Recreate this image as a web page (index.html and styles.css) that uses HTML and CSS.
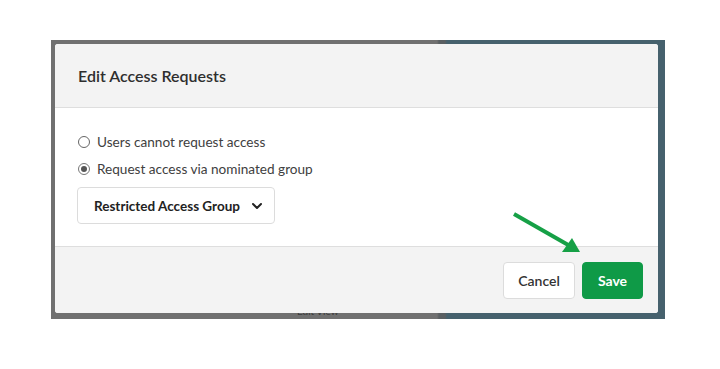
FILE: index.html
```html
<!DOCTYPE html>
<html lang="en">
<head>
  <meta charset="UTF-8">
  <title>Edit Access Requests</title>
  <link rel="stylesheet" href="styles.css">
</head>
<body>
  <div class="backdrop">
    <span class="peek">Edit View</span>
    <div class="modal">
      <div class="modal-header">
        <h2>Edit Access Requests</h2>
      </div>
      <div class="modal-body">
        <label class="radio-row">
          <span class="radio"></span>
          Users cannot request access
        </label>
        <label class="radio-row">
          <span class="radio checked"></span>
          Request access via nominated group
        </label>
        <button class="group-select">
          Restricted Access Group
          <svg class="chevron" width="12" height="8" viewBox="0 0 12 8"><path d="M2 2l4 4 4-4" fill="none" stroke="#222" stroke-width="2" stroke-linecap="round" stroke-linejoin="round"/></svg>
        </button>
      </div>
      <div class="modal-footer">
        <button class="btn btn-cancel">Cancel</button>
        <button class="btn btn-save">Save</button>
      </div>
    </div>
    <svg class="arrow" width="80" height="50" viewBox="0 0 80 50">
      <line x1="2" y1="3" x2="58" y2="35" stroke="#16a046" stroke-width="4"/>
      <polygon points="68,41 50,41 60,27" fill="#16a046"/>
    </svg>
  </div>
</body>
</html>
```

FILE: styles.css
```css
body {
  margin: 0;
  padding: 40px 0 0 51px;
  background: #fff;
  font-family: 'Lato', 'Open Sans', sans-serif;
  color: #333;
}
.backdrop {
  position: relative;
  width: 603px;
  height: 269px;
  padding: 4px 7px 6px 4px;
  background: linear-gradient(90deg, #707070 0, #707070 386px, #5a5f62 388px, #5a5f62 394px, #46616d 396px, #46616d 100%);
}
.peek {
  position: absolute;
  left: 246px;
  bottom: 2px;
  font-size: 10px;
  color: #3a3a3a;
}
.modal {
  position: relative;
  display: flex;
  flex-direction: column;
  height: 100%;
  background: #fff;
  border-radius: 3px;
  overflow: hidden;
}
.modal-header {
  height: 63px;
  display: flex;
  align-items: center;
  padding-left: 23px;
  background: #f3f3f3;
  border-bottom: 1px solid #dedede;
}
.modal-header h2 {
  margin: 0;
  font-size: 16px;
  font-weight: 600;
  color: #2e2e2e;
}
.modal-body {
  flex: 1;
  display: flex;
  flex-direction: column;
  align-items: flex-start;
  padding: 20px 22px 0;
}
.radio-row {
  display: flex;
  align-items: center;
  gap: 7px;
  height: 27px;
  font-size: 13.6px;
  color: #404040;
}
.radio {
  width: 12px;
  height: 12px;
  border: 1px solid #666;
  border-radius: 50%;
  margin-left: 1px;
  box-sizing: border-box;
  display: flex;
  align-items: center;
  justify-content: center;
}
.radio.checked {
  border-color: #777;
}
.radio.checked::after {
  content: "";
  width: 6px;
  height: 6px;
  border-radius: 50%;
  background: #555;
}
.group-select {
  margin-top: 5px;
  width: 198px;
  height: 37px;
  box-sizing: border-box;
  display: flex;
  align-items: center;
  gap: 11px;
  padding: 0 16px;
  white-space: nowrap;
  background: #fff;
  border: 1px solid #dcdcdc;
  border-radius: 4px;
  font-family: inherit;
  font-size: 13.5px;
  font-weight: 700;
  color: #222;
}
.chevron {
  flex-shrink: 0;
}
.modal-footer {
  height: 67px;
  display: flex;
  justify-content: flex-end;
  align-items: flex-start;
  gap: 7px;
  padding: 15px 15px 0 0;
  box-sizing: border-box;
  background: #f3f3f3;
  border-top: 1px solid #dedede;
}
.btn {
  height: 37px;
  border-radius: 4px;
  font-family: inherit;
  font-size: 14px;
  font-weight: 600;
}
.btn-cancel {
  width: 72px;
  background: #fff;
  border: 1px solid #dcdcdc;
  color: #333;
}
.btn-save {
  width: 61px;
  background: #0f9a47;
  border: 1px solid #0f9a47;
  color: #fff;
  font-weight: 700;
}
.arrow {
  position: absolute;
  left: 461px;
  top: 171px;
}
```
